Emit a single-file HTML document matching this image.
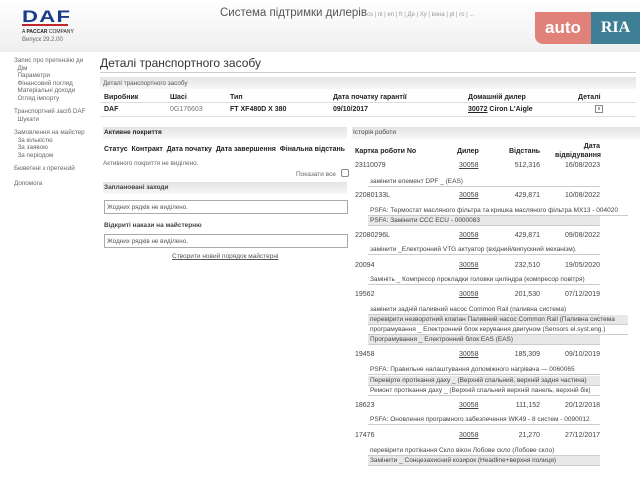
<!DOCTYPE html>
<html><head><meta charset="utf-8"><style>
*{margin:0;padding:0;box-sizing:border-box}
body{width:640px;height:480px;overflow:hidden;background:#fff;font-family:"Liberation Sans",Arial,sans-serif;font-size:7px;color:#333;position:relative}
.a{position:absolute;white-space:nowrap}
.b{font-weight:bold;color:#222}
.u{text-decoration:underline}
.bar{position:absolute;background:linear-gradient(#e4e4e4,#f7f7f7);}
.sub{position:absolute;left:368px;width:232px;height:10px;line-height:10px;padding-left:2px;white-space:nowrap;overflow:hidden;font-size:6.5px;color:#444;border-bottom:1px solid #ccc}
.g{background:#e8e8e8}
.r{position:absolute;height:12px;line-height:12px;font-size:7px;color:#444}
</style></head><body>
<div class="a" style="left:0;top:0;width:640px;height:52px;background:linear-gradient(#fff,#efefef)"></div>
<div class="a" style="left:22px;top:7px;font:900 17px 'Liberation Sans';color:#1a3a8a;letter-spacing:1px;transform:scaleX(1.3);transform-origin:left">DAF</div>
<div class="a" style="left:22px;top:24px;width:46px;height:2px;background:#c0282d"></div>
<div class="a" style="left:22px;top:29px;font-size:5px;color:#222">A <b>PACCAR</b> COMPANY</div>
<div class="a" style="left:22px;top:37px;font-size:6px;color:#666">Випуск 29.2.00</div>
<div class="a" style="left:220px;top:7px;font-size:11.5px;color:#555">Система підтримки дилерів<span style="font-size:6px;color:#999">cs | nl | en | fr | Де | Ху | вона | pl | ro | ...</span></div>
<div class="a" style="left:535px;top:12px;width:56px;height:32px;background:#e0817a;border-radius:0 0 0 8px;color:#fff;font:bold 17px 'Liberation Sans';line-height:32px;text-align:center">auto</div>
<div class="a" style="left:591px;top:12px;width:49px;height:32px;background:#3f7f96;color:#fff;font:bold 16px 'Liberation Serif';line-height:32px;text-align:center">RIA</div>

<div class="a" style="left:14px;top:57px;font-size:6.3px;color:#666;line-height:7.5px">Запис про претензію ди<br>&nbsp;&nbsp;Дім<br>&nbsp;&nbsp;Параметри<br>&nbsp;&nbsp;Фінансовий погляд<br>&nbsp;&nbsp;Матеріальні доходи<br>&nbsp;&nbsp;Огляд імпорту</div>
<div class="a" style="left:14px;top:108px;font-size:6.3px;color:#666;line-height:7.5px">Транспортний засіб DAF<br>&nbsp;&nbsp;Шукати</div>
<div class="a" style="left:14px;top:129px;font-size:6.3px;color:#666;line-height:7.5px">Замовлення на майстер<br>&nbsp;&nbsp;За кількістю<br>&nbsp;&nbsp;За заявою<br>&nbsp;&nbsp;За періодом</div>
<div class="a" style="left:14px;top:165px;font-size:6.3px;color:#666">Бюветені з претензій</div>
<div class="a" style="left:14px;top:180px;font-size:6.3px;color:#666">Допомога</div>

<div class="a" style="left:100px;top:56px;font-size:12px;color:#333">Деталі транспортного засобу</div>
<div class="a" style="left:100px;top:72px;width:536px;height:1px;background:#ccc"></div>
<div class="bar" style="left:100px;top:77px;width:536px;height:12px"></div>
<div class="a" style="left:103px;top:80px;font-size:6.3px;color:#555">Деталі транспортного засобу</div>
<div class="a b" style="left:104px;top:94px">Виробник</div>
<div class="a b" style="left:170px;top:94px">Шасі</div>
<div class="a b" style="left:230px;top:94px">Тип</div>
<div class="a b" style="left:333px;top:94px">Дата початку гарантії</div>
<div class="a b" style="left:468px;top:94px">Домашній дилер</div>
<div class="a b" style="left:578px;top:94px">Деталі</div>
<div class="a" style="left:100px;top:102px;width:536px;height:1px;background:#ddd"></div>
<div class="a b" style="left:104px;top:106px">DAF</div>
<div class="a" style="left:170px;top:106px;color:#777">0G176603</div>
<div class="a b" style="left:230px;top:106px">FT XF480D X 380</div>
<div class="a b" style="left:333px;top:106px">09/10/2017</div>
<div class="a b" style="left:468px;top:106px"><span class="u">30072</span> Ciron L'Aigle</div>
<div class="a" style="left:595px;top:105px;width:8px;height:8px;border:1px solid #888;font-size:5px;text-align:center;line-height:6px">x</div>
<div class="a" style="left:100px;top:116px;width:536px;height:1px;background:#ddd"></div>

<div class="bar" style="left:103px;top:127px;width:244px;height:12px"></div>
<div class="a b" style="left:104px;top:129px;font-size:6.5px">Активне покриття</div>
<div class="a b" style="left:104px;top:146px">Статус&nbsp; Контракт&nbsp; Дата початку&nbsp; Дата завершення&nbsp; Фінальна відстань</div>
<div class="a" style="left:103px;top:160px;font-size:6.3px;color:#666">Активного покриття не виділено.</div>
<div class="a" style="left:296px;top:171px;font-size:6.5px;color:#666">Показати все</div>
<div class="a" style="left:341px;top:169px;width:8px;height:8px;border:1px solid #888;border-radius:2px"></div>
<div class="bar" style="left:103px;top:182px;width:244px;height:12px"></div>
<div class="a b" style="left:104px;top:184px;font-size:6.5px;color:#444">Заплановані заходи</div>
<div class="a" style="left:104px;top:200px;width:244px;height:14px;border:1px solid #aaa;font-size:6.3px;color:#555;padding:3px 2px">Жодних рядків не виділено.</div>
<div class="a b" style="left:104px;top:222px;font-size:6.5px;color:#444">Відкриті накази на майстерню</div>
<div class="a" style="left:104px;top:234px;width:244px;height:14px;border:1px solid #aaa;font-size:6.3px;color:#555;padding:3px 2px">Жодних рядків не виділено.</div>
<div class="a u" style="left:172px;top:253px;font-size:6.5px;color:#555">Створити новий порядок майстерні</div>

<div class="bar" style="left:352px;top:127px;width:288px;height:12px"></div>
<div class="a" style="left:353px;top:129px;font-size:6.5px;color:#444">Історія роботи</div>
<div class="a b" style="left:355px;top:148px">Картка роботи No</div>
<div class="a b" style="left:457px;top:148px">Дилер</div>
<div class="a b" style="left:509px;top:148px">Відстань</div>
<div class="a b" style="left:555px;top:142px;text-align:right;width:45px;line-height:9px">Дата<br>відвідування</div>

<div class="r" style="left:355px;top:160px">23110079</div><div class="r u" style="left:459px;top:160px">30058</div><div class="r" style="left:505px;top:160px;width:35px;text-align:right">512,316</div><div class="r" style="left:555px;top:160px;width:45px;text-align:right">16/08/2023</div>
<div class="sub" style="top:177px">замінити елемент DPF _ (EAS)</div>
<div class="r" style="left:355px;top:190px">22080133L</div><div class="r u" style="left:459px;top:190px">30058</div><div class="r" style="left:505px;top:190px;width:35px;text-align:right">429,871</div><div class="r" style="left:555px;top:190px;width:45px;text-align:right">10/08/2022</div>
<div class="sub" style="top:206px;width:260px">PSFA: Термостат масляного фільтра та кришка масляного фільтра MX13 - 004020</div>
<div class="sub g" style="top:216px">PSFA: Замінити CCC ECU - 0000083</div>
<div class="r" style="left:355px;top:230px">22080296L</div><div class="r u" style="left:459px;top:230px">30058</div><div class="r" style="left:505px;top:230px;width:35px;text-align:right">429,871</div><div class="r" style="left:555px;top:230px;width:45px;text-align:right">09/08/2022</div>
<div class="sub" style="top:245px">замінити _Електронний VTG актуатор (вхідний/випускний механізм).</div>
<div class="r" style="left:355px;top:260px">20094</div><div class="r u" style="left:459px;top:260px">30058</div><div class="r" style="left:505px;top:260px;width:35px;text-align:right">232,510</div><div class="r" style="left:555px;top:260px;width:45px;text-align:right">19/05/2020</div>
<div class="sub" style="top:275px">Замініть _ Компресор прокладки головки циліндра (компресор повітря)</div>
<div class="r" style="left:355px;top:289px">19562</div><div class="r u" style="left:459px;top:289px">30058</div><div class="r" style="left:505px;top:289px;width:35px;text-align:right">201,530</div><div class="r" style="left:555px;top:289px;width:45px;text-align:right">07/12/2019</div>
<div class="sub" style="top:305px">замінити задній паливний насос Common Rail (паливна система)</div>
<div class="sub g" style="top:315px;width:260px">перевірити незворотний клапан Паливний насос Common Rail (Паливна система</div>
<div class="sub" style="top:325px;width:260px">програмування _ Електронний блок керування двигуном (Sensors el.syst.eng.)</div>
<div class="sub g" style="top:335px">Програмування _ Електронний блок EAS (EAS)</div>
<div class="r" style="left:355px;top:349px">19458</div><div class="r u" style="left:459px;top:349px">30058</div><div class="r" style="left:505px;top:349px;width:35px;text-align:right">185,309</div><div class="r" style="left:555px;top:349px;width:45px;text-align:right">09/10/2019</div>
<div class="sub" style="top:365px">PSFA: Правильне налаштування допоміжного нагрівача — 0060065</div>
<div class="sub g" style="top:376px">Перевірте протікання даху _ (Верхній спальний, верхній задня частина)</div>
<div class="sub" style="top:386px">Ремонт протікання даху _ (Верхній спальний верхній панель, верхній бік)</div>
<div class="r" style="left:355px;top:400px">18623</div><div class="r u" style="left:459px;top:400px">30058</div><div class="r" style="left:505px;top:400px;width:35px;text-align:right">111,152</div><div class="r" style="left:555px;top:400px;width:45px;text-align:right">20/12/2018</div>
<div class="sub" style="top:415px">PSFA: Оновлення програмного забезпечення WK49 - 8 систем - 0090012</div>
<div class="r" style="left:355px;top:430px">17476</div><div class="r u" style="left:459px;top:430px">30058</div><div class="r" style="left:505px;top:430px;width:35px;text-align:right">21,270</div><div class="r" style="left:555px;top:430px;width:45px;text-align:right">27/12/2017</div>
<div class="sub" style="top:446px">перевірити протікання Скло вікон Лобове скло (Лобове скло)</div>
<div class="sub g" style="top:456px">Замінити _ Сонцезахисний козирок (Headline+верхня полиця)</div>
</body></html>
